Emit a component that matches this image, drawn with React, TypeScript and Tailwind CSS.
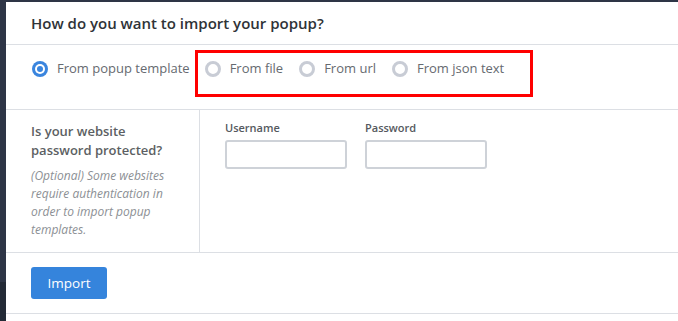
import React from "react";

const Radio = ({ checked, label }: { checked?: boolean; label: string }) => (
  <label className="flex items-center gap-[9px] cursor-pointer">
    {checked ? (
      <span className="w-4 h-4 rounded-full bg-[#3a85de] flex items-center justify-center">
        <span className="w-[10px] h-[10px] rounded-full bg-white flex items-center justify-center">
          <span className="w-[6px] h-[6px] rounded-full bg-[#3a85de]" />
        </span>
      </span>
    ) : (
      <span className="w-4 h-4 rounded-full border-[3px] border-[#c8ccd5] bg-white" />
    )}
    <span className="text-[13px] text-[#666a70]">{label}</span>
  </label>
);

export default function App() {
  return (
    <div
      className="flex w-[678px] h-[321px] bg-white overflow-hidden"
      style={{ fontFamily: '"Open Sans", "Noto Sans", sans-serif' }}
    >
      <div className="w-[6px] shrink-0 flex flex-col">
        <div className="h-[282px] bg-[#2e3546]" />
        <div className="flex-1 bg-[#232a36]" />
      </div>
      <div className="flex-1 flex flex-col border-t-2 border-[#2e3546]">
        <div className="h-[43px] flex items-center pl-[25px] border-b border-[#dcdfe4]">
          <h1 className="text-[15px] font-semibold text-[#2f3337]">
            How do you want to import your popup?
          </h1>
        </div>
        <div className="relative h-[65px] flex items-start pt-[14px] pl-[26px] border-b border-[#dcdfe4]">
          <Radio checked label="From popup template" />
          <div className="ml-[15px] flex gap-[16px]">
            <Radio label="From file" />
            <Radio label="From url" />
            <Radio label="From json text" />
          </div>
          {/* highlight annotation */}
          <div className="absolute left-[189px] top-[5px] w-[338px] h-[47px] border-[3px] border-[#ff0000] pointer-events-none" />
        </div>
        <div className="h-[143px] flex border-b border-[#dcdfe4]">
          <div className="w-[194px] shrink-0 border-r border-[#dcdfe4] pl-[25px] pt-[12px] whitespace-nowrap">
            <h2 className="text-[13px] font-semibold leading-[19px] text-[#5c5f63]">
              Is your website
              <br />
              password protected?
            </h2>
            <p className="mt-[7px] text-[12px] italic leading-[18px] text-[#8c8f94]">
              (Optional) Some websites
              <br />
              require authentication in
              <br />
              order to import popup
              <br />
              templates.
            </p>
          </div>
          <div className="flex gap-[18px] pl-[25px] pt-[9px]">
            <div className="flex flex-col">
              <span className="text-[11px] font-semibold text-[#55595e] leading-[17px]">Username</span>
              <input className="mt-[4px] w-[122px] h-[29px] border-2 border-[#ced2d8] rounded-[3px] outline-none" />
            </div>
            <div className="flex flex-col">
              <span className="text-[11px] font-semibold text-[#55595e] leading-[17px]">Password</span>
              <input type="password" className="mt-[4px] w-[122px] h-[29px] border-2 border-[#ced2d8] rounded-[3px] outline-none" />
            </div>
          </div>
        </div>
        <div className="h-[61px] flex items-center pl-[25px] border-b border-[#dcdfe4]">
          <button className="w-[76px] h-[32px] rounded-[3px] bg-[#3584dc] text-white text-[13.5px]">
            Import
          </button>
        </div>
      </div>
    </div>
  );
}
